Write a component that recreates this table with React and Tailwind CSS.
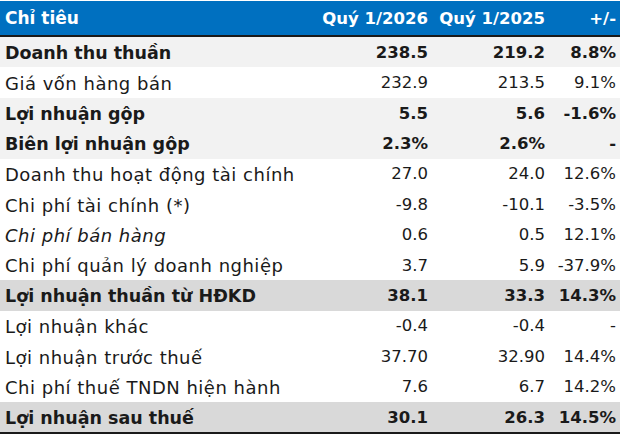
import React from "react";

const rows = [
  { l: "Doanh thu thuần", a: "238.5", b: "219.2", c: "8.8%", bold: true, bg: "bg-[#f2f2f2]" },
  { l: "Giá vốn hàng bán", a: "232.9", b: "213.5", c: "9.1%" },
  { l: "Lợi nhuận gộp", a: "5.5", b: "5.6", c: "-1.6%", bold: true, bg: "bg-[#f2f2f2]" },
  { l: "Biên lợi nhuận gộp", a: "2.3%", b: "2.6%", c: "-", bold: true, bg: "bg-[#f2f2f2]" },
  { l: "Doanh thu hoạt động tài chính", a: "27.0", b: "24.0", c: "12.6%" },
  { l: "Chi phí tài chính (*)", a: "-9.8", b: "-10.1", c: "-3.5%" },
  { l: "Chi phí bán hàng", a: "0.6", b: "0.5", c: "12.1%", italic: true },
  { l: "Chi phí quản lý doanh nghiệp", a: "3.7", b: "5.9", c: "-37.9%" },
  { l: "Lợi nhuận thuần từ HĐKD", a: "38.1", b: "33.3", c: "14.3%", bold: true, bg: "bg-[#d9d9d9]" },
  { l: "Lợi nhuận khác", a: "-0.4", b: "-0.4", c: "-" },
  { l: "Lợi nhuận trước thuế", a: "37.70", b: "32.90", c: "14.4%" },
  { l: "Chi phí thuế TNDN hiện hành", a: "7.6", b: "6.7", c: "14.2%" },
  { l: "Lợi nhuận sau thuế", a: "30.1", b: "26.3", c: "14.5%", bold: true, bg: "bg-[#d9d9d9]" },
];

export default function App() {
  return (
    <div className="w-[624px] h-[437px] bg-white" style={{ fontFamily: "'DejaVu Sans', sans-serif" }}>
      <div className="w-[620px] pt-[1px]">
        <div className="h-[32px] pt-[2px] bg-[#0070c0] text-white font-bold text-[16.5px] flex items-center border-b-2 border-[#1a1a1a] box-content">
          <div className="flex-1 pl-[5px] text-[17px]">Chỉ tiêu</div>
          <div className="w-[117px] text-right">Quý 1/2026</div>
          <div className="w-[117px] text-right">Quý 1/2025</div>
          <div className="w-[75px] text-right pr-[4px]">+/-</div>
        </div>
        {rows.map((r, i) => (
          <div
            key={i}
            className={`h-[30.4px] pt-[2px] flex items-center text-[16.5px] text-[#1a1a1a] ${r.bg || "bg-white"} ${r.bold ? "font-bold" : "font-normal"}`}
          >
            <div
              className={`flex-1 pl-[5px] ${r.italic ? "italic" : ""} ${r.bold ? "text-[17.5px]" : "text-[18px] tracking-[0.5px]"}`}
            >
              {r.l}
            </div>
            <div className="w-[117px] text-right">{r.a}</div>
            <div className="w-[117px] text-right">{r.b}</div>
            <div className="w-[75px] text-right pr-[4px]">{r.c}</div>
          </div>
        ))}
        <div className="h-[1.5px] bg-[#1a1a1a]"></div>
      </div>
    </div>
  );
}
